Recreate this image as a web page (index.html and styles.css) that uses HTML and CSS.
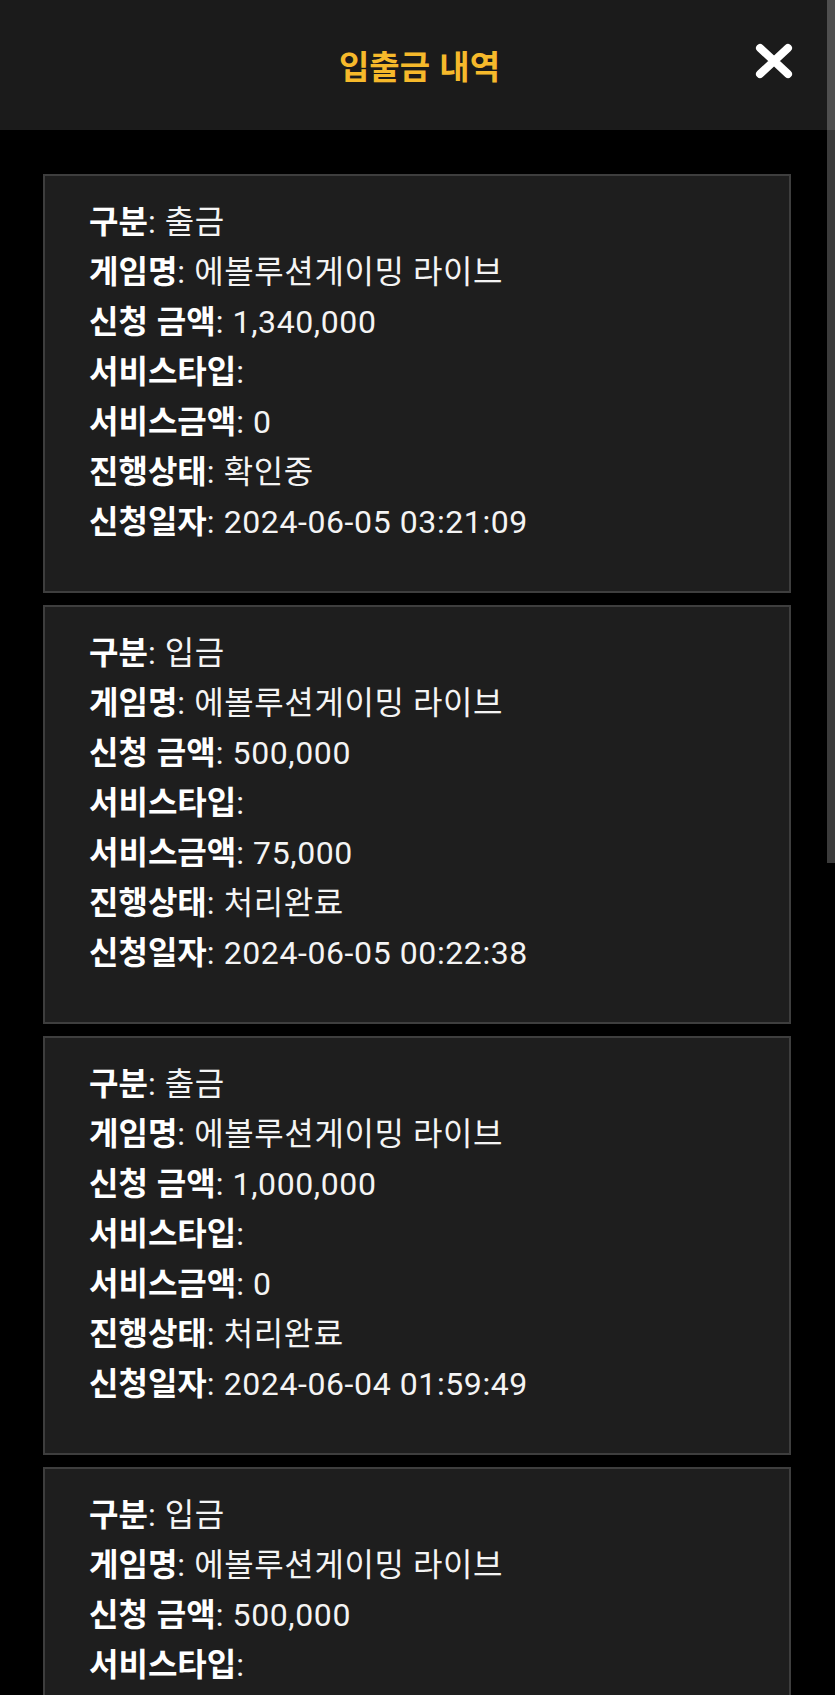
FILE: index.html
```html
<!DOCTYPE html>
<html lang="ko">
<head>
  <meta charset="UTF-8">
  <title>입출금 내역</title>
  <link rel="stylesheet" href="styles.css">
</head>
<body>

  <!-- 상단 헤더 -->
  <div class="header">
    <span></span>
    <h1 class="title">입출금 내역</h1>
    <button class="close" aria-label="닫기">
      <svg width="38" height="36" viewBox="0 0 38 36">
        <path d="M5 5 L33 31 M33 5 L5 31" stroke="#fff" stroke-width="8" stroke-linecap="round"/>
      </svg>
    </button>
  </div>

  <!-- 내역 목록 -->
  <div class="list">
    <div class="card">
      <div class="row"><b>구분</b>: 출금</div>
      <div class="row"><b>게임명</b>: 에볼루션게이밍 라이브</div>
      <div class="row"><b>신청 금액</b>: 1,340,000</div>
      <div class="row"><b>서비스타입</b>:</div>
      <div class="row"><b>서비스금액</b>: 0</div>
      <div class="row"><b>진행상태</b>: 확인중</div>
      <div class="row"><b>신청일자</b>: 2024-06-05 03:21:09</div>
    </div>

    <div class="card">
      <div class="row"><b>구분</b>: 입금</div>
      <div class="row"><b>게임명</b>: 에볼루션게이밍 라이브</div>
      <div class="row"><b>신청 금액</b>: 500,000</div>
      <div class="row"><b>서비스타입</b>:</div>
      <div class="row"><b>서비스금액</b>: 75,000</div>
      <div class="row"><b>진행상태</b>: 처리완료</div>
      <div class="row"><b>신청일자</b>: 2024-06-05 00:22:38</div>
    </div>

    <div class="card">
      <div class="row"><b>구분</b>: 출금</div>
      <div class="row"><b>게임명</b>: 에볼루션게이밍 라이브</div>
      <div class="row"><b>신청 금액</b>: 1,000,000</div>
      <div class="row"><b>서비스타입</b>:</div>
      <div class="row"><b>서비스금액</b>: 0</div>
      <div class="row"><b>진행상태</b>: 처리완료</div>
      <div class="row"><b>신청일자</b>: 2024-06-04 01:59:49</div>
    </div>

    <div class="card">
      <div class="row"><b>구분</b>: 입금</div>
      <div class="row"><b>게임명</b>: 에볼루션게이밍 라이브</div>
      <div class="row"><b>신청 금액</b>: 500,000</div>
      <div class="row"><b>서비스타입</b>:</div>
      <div class="row"><b>서비스금액</b>: 75,000</div>
      <div class="row"><b>진행상태</b>: 처리완료</div>
      <div class="row"><b>신청일자</b>: 2024-06-03 22:10:14</div>
    </div>
  </div>

  <!-- 스크롤바 (오버레이) -->
  <div class="scroll-thumb"></div>

</body>
</html>
```

FILE: styles.css
```css
html {
  scrollbar-width: none;
}

html::-webkit-scrollbar {
  display: none;
}

body {
  margin: 0;
  background-color: #000;
  color: #fff;
  font-family: Roboto, "Noto Sans CJK KR", sans-serif;
}

/* 헤더 */
.header {
  height: 130px;
  background-color: #1b1b1b;
  display: grid;
  grid-template-columns: 1fr auto 1fr;
  align-items: center;
}

.title {
  margin: 0 0 0 4px;
  font-family: "Noto Sans CJK KR", sans-serif;
  font-size: 33px;
  line-height: 1;
  font-weight: 700;
  color: #f6b92b;
}

.close {
  justify-self: end;
  margin: 0 42px 9px 0;
  padding: 0;
  border: none;
  background: none;
  display: flex;
  cursor: pointer;
}

/* 목록 */
.list {
  padding: 44px 44px 40px 43px;
  display: flex;
  flex-direction: column;
  gap: 12px;
}

.card {
  background-color: #1e1e1e;
  border: 2px solid #3e3e3e;
  padding: 21px 20px 44px 44px;
}

.row {
  font-size: 32px;
  line-height: 50px;
  letter-spacing: 0.6px;
  color: #f4f4f4;
  white-space: nowrap;
}

.row b {
  color: #fff;
  font-family: "Noto Sans CJK KR", sans-serif;
  font-weight: 700;
  line-height: 1;
  letter-spacing: 0;
}

/* 스크롤바 */
.scroll-thumb {
  position: fixed;
  top: 0;
  right: 0;
  width: 8px;
  height: 863px;
  background-color: rgba(255, 255, 255, 0.23);
}
```
